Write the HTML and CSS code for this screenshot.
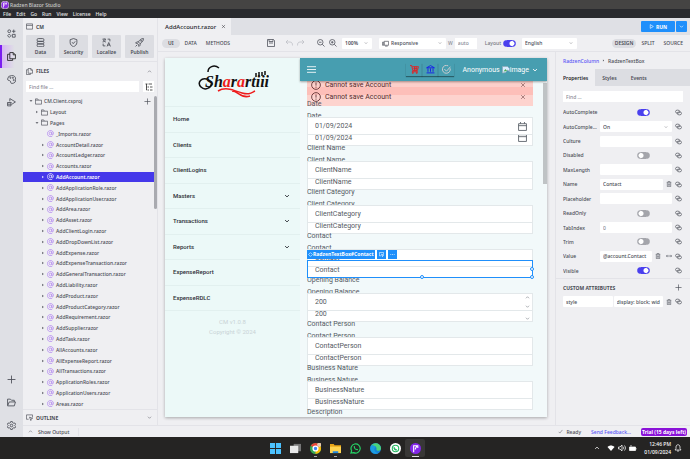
FILE: index.html
```
<!DOCTYPE html>
<html lang="en">
<head>
  <meta charset="UTF-8" />
  <title>Radzen Blazor Studio</title>
  <link rel="stylesheet" href="styles.css">
</head>
<body>
  <!-- Shared icons -->
  <svg class="sprite" aria-hidden="true">
    <symbol id="i-down" viewBox="0 0 16 16"><path d="M3 5.5l5 5 5-5"/></symbol>
    <symbol id="i-up" viewBox="0 0 16 16"><path d="M3 10.5l5-5 5 5"/></symbol>
    <symbol id="i-tri" viewBox="0 0 16 16"><path d="M5 3l6 5-6 5z" fill="currentColor" stroke="none"/></symbol>
    <symbol id="i-trid" viewBox="0 0 16 16"><path d="M2 5h12l-6 6z" fill="currentColor" stroke="none"/></symbol>
    <symbol id="i-plus" viewBox="0 0 16 16"><path d="M8 1v14M1 8h14"/></symbol>
    <symbol id="i-close" viewBox="0 0 16 16"><path d="M3 3l10 10M13 3L3 13"/></symbol>
    <symbol id="i-folder" viewBox="0 0 16 16"><path d="M1 14V2h5l2 3h7v9zM1 5h7"/></symbol>
    <symbol id="i-open" viewBox="0 0 16 16"><path d="M1 13V2h5l2 2h5v3M1 14l3-7h11l-2 7z"/></symbol>
    <symbol id="i-files" viewBox="0 0 16 16"><path d="M5 1h6l4 4v7H5zM11 1v4h4M5 4H1v11h9v-3"/></symbol>
    <symbol id="i-razor" viewBox="0 0 16 16"><circle cx="8" cy="8" r="3"/><path d="M11 5v4c0 3 4 2 4-1a7 7 0 1 0-3 6"/></symbol>
    <symbol id="i-window" viewBox="0 0 16 16"><path d="M1 2h14v12H1zM1 5.5h14"/></symbol>
    <symbol id="i-link" viewBox="0 0 16 16"><ellipse cx="6" cy="6" rx="5" ry="3.5"/><ellipse cx="10" cy="10" rx="5" ry="3.5"/></symbol>
    <symbol id="i-trash" viewBox="0 0 16 16"><path d="M2 3.5h12M6 3V1h4v2M3.5 4v11h9V4M6.5 6.5v6M9.5 6.5v6"/></symbol>
    <symbol id="i-calendar" viewBox="0 0 16 16"><path d="M1 3h14v12H1zM1 6.5h14M4.5 3V0M11.5 3V0"/></symbol>
    <symbol id="i-alert" viewBox="0 0 16 16"><circle cx="8" cy="8" r="7"/><path d="M8 4v5M8 10.5v1.8"/></symbol>
    <symbol id="i-outline" viewBox="0 0 16 16"><path d="M6 12H1V2h14v6M8 7l7 3-3 1-1 4z"/></symbol>
  </svg>

  <div class="window">
    <header class="titlebar">
      <svg class="app-logo" viewBox="0 0 16 16"><circle cx="8" cy="8" r="8" fill="#8a2be2"/><path d="M5 13V4h4l-2 5M11 3v4" stroke="#fff" stroke-width="1.5" fill="none"/></svg>
      <span>Radzen Blazor Studio</span>
    </header>
    <nav class="menubar">
      <button>File</button><button>Edit</button><button>Go</button><button>Run</button><button>View</button><button>License</button><button>Help</button>
    </nav>

    <div class="workspace">
      <nav class="rail">
        <button aria-label="Toolbox"><svg viewBox="0 0 16 16"><circle cx="4" cy="4" r="2.5"/><path d="M12 1v6M9 4h6M4 9l3 3-3 3-3-3zM9.5 9.5h5v5h-5z"/></svg></button>
        <button class="active" aria-label="Files"><svg><use href="#i-files"/></svg></button>
        <button aria-label="Theme"><svg viewBox="0 0 16 16"><path d="M8 1a7 7 0 0 0-7 6c0 4 4 2 5 4s0 4 3 4a7 7 0 0 0-1-14z"/><circle cx="6" cy="5" r="1"/><circle cx="10.5" cy="5" r="1"/><circle cx="12" cy="9" r="1"/></svg></button>
        <button aria-label="Debug"><svg viewBox="0 0 16 16"><path d="M5 6V1l10 6-7 4.5M1 8h6v6H1zM1 11h6M0 8l1 1M8 8L7 9"/></svg></button>
        <span class="spacer"></span>
        <button aria-label="Add"><svg><use href="#i-plus"/></svg></button>
        <button aria-label="Open"><svg><use href="#i-open"/></svg></button>
        <button aria-label="Settings"><svg viewBox="0 0 16 16"><path d="M6.5 1h3l.5 2 2 1 2-.5 1.5 2.5-1.5 1.5v1l1.5 1.5-1.5 2.5-2-.5-2 1-.5 2h-3l-.5-2-2-1-2 .5L.5 10 2 8.5v-1L.5 6 2 3.5l2 .5 2-1z"/><circle cx="8" cy="8" r="2.3"/></svg></button>
      </nav>

      <aside class="explorer">
        <h2 class="project"><svg><use href="#i-window"/></svg>CM</h2>
        <div class="actions">
          <button><svg viewBox="0 0 16 16"><rect x="2" y="1" width="12" height="5" rx="2"/><rect x="2" y="6" width="12" height="4.5" rx="2"/><rect x="2" y="10.5" width="12" height="5" rx="2"/></svg>Data</button>
          <button><svg viewBox="0 0 16 16"><path d="M8 1l6 2v5c0 4-3 6-6 7.5C5 14 2 12 2 8V3zM5.5 7.5L7.5 10 11 6"/></svg>Security</button>
          <button><svg viewBox="0 0 16 16"><path d="M1 2h6M4 1v1M6 2c0 3-3 5-5 5M2 3c1 3 3 4 5 4M9 15l3-7 3 7M10 12.5h4M10 2h4v4M6 14H2v-4"/></svg>Localize</button>
          <button><svg viewBox="0 0 16 16"><path d="M15 1c-5 0-7 3-9 6l3 3c3-2 6-4 6-9zM6 7H3L1 9l4 1M9 10v3l-2 2-1-4M4 12l-3 3"/><circle cx="11" cy="5" r="1"/></svg>Publish</button>
        </div>
        <h2 class="section-title"><svg><use href="#i-files"/></svg>FILES<svg class="fold"><use href="#i-up"/></svg></h2>
        <div class="find">
          <input type="text" aria-label="Find file" placeholder="Find file ...">
          <button aria-label="Tree view"><svg viewBox="0 0 16 16"><path d="M1 2h4M7 2h7M6 8h2M10 8h5M6 14h2M10 14h5M3 2v12h2M3 8h2"/></svg></button>
        </div>
        <ul class="tree" id="tree">
          <li class="root"><svg class="tw"><use href="#i-trid"/></svg><svg><use href="#i-folder"/></svg>CM.Client.csproj<svg class="add"><use href="#i-plus"/></svg></li>
          <li class="dir"><svg class="tw"><use href="#i-tri"/></svg><svg><use href="#i-folder"/></svg>Layout</li>
          <li class="dir"><svg class="tw"><use href="#i-trid"/></svg><svg><use href="#i-folder"/></svg>Pages</li>
        </ul>
        <h2 class="outline"><svg><use href="#i-outline"/></svg>OUTLINE<svg class="fold"><use href="#i-down"/></svg></h2>
      </aside>

      <main class="editor">
        <div class="tabs">
          <button class="file-tab">AddAccount.razor<svg><use href="#i-close"/></svg></button>
          <span class="spacer"></span>
          <button class="run"><svg viewBox="0 0 16 16"><path d="M4 2l10 6-10 6z"/></svg>RUN</button>
          <button class="run run-more" aria-label="Run options"><svg><use href="#i-down"/></svg></button>
        </div>

        <div class="toolbar">
          <div class="modes"><button class="active">UI</button><button>DATA</button><button>METHODS</button></div>
          <div class="edit-tools">
            <button aria-label="Save"><svg viewBox="0 0 16 16"><path d="M1 1h12l2 2v12H1zM4 1v4h8V1M4 8h8"/></svg></button>
            <button class="off undo" aria-label="Undo"><svg viewBox="0 0 16 16"><path d="M6 2L2 6l4 4M2 6h8c4 0 5 3 5 7"/></svg></button>
            <button class="off" aria-label="Redo"><svg viewBox="0 0 16 16"><path d="M10 2l4 4-4 4M14 6H6c-4 0-5 3-5 7"/></svg></button>
            <button class="zoom-out" aria-label="Zoom out"><svg viewBox="0 0 16 16"><circle cx="6.5" cy="6.5" r="5.5"/><path d="M10.5 10.5L15 15M4 6.5h5"/></svg></button>
            <button aria-label="Zoom in"><svg viewBox="0 0 16 16"><circle cx="6.5" cy="6.5" r="5.5"/><path d="M10.5 10.5L15 15M4 6.5h5M6.5 4v5"/></svg></button>
          </div>
          <div class="pick zoom"><select aria-label="Zoom"><option>100%</option></select><svg><use href="#i-down"/></svg></div>
          <div class="pick device"><svg class="lead" viewBox="0 0 16 16"><path d="M5 3h10v9H5zM1 5h3v7H1zM7 14h6"/></svg><select aria-label="Device"><option>Responsive</option></select><svg><use href="#i-down"/></svg></div>
          <label class="size">W <input type="text" placeholder="auto"></label>
          <label class="layout-switch">Layout <input type="checkbox" class="switch" checked></label>
          <div class="pick lang"><select aria-label="Language"><option>English</option></select><svg><use href="#i-down"/></svg></div>
          <span class="spacer"></span>
          <div class="modes views"><button class="active">DESIGN</button><button>SPLIT</button><button>SOURCE</button></div>
        </div>

        <div class="stage">
          <div class="canvas">
            <!-- Designed application -->
            <section class="app">
              <div class="app-side">
                <div class="brand">
                  <svg viewBox="0 0 72 36" role="img" aria-label="Sharartw">
                    <text x="8" y="23" class="brand-text">Sh<tspan class="red">a</tspan>r<tspan class="red">a</tspan>rtiii</text>
                    <path d="M22 4C17 0 11 3 11 8M12 16C4 12 0 19 4 23s10 1 11-4" class="ink"/>
                    <path d="M59 9v4M62 8v4M65 8v4M68 7v4" class="ink"/>
                    <path d="M21 27c8-5 17 0 24 2s9 0 13-2M35 27c6 0 9 8 18 5" class="swash"/>
                  </svg>
                </div>
                <ul class="app-nav">
                  <li>Home</li>
                  <li>Clients</li>
                  <li>ClientLogins</li>
                  <li>Masters<svg><use href="#i-down"/></svg></li>
                  <li>Transactions<svg><use href="#i-down"/></svg></li>
                  <li>Reports<svg><use href="#i-down"/></svg></li>
                  <li>ExpenseReport</li>
                  <li>ExpenseRDLC</li>
                </ul>
                <p class="app-foot">CM v1.0.8<br>Copyright © 2024</p>
              </div>
              <div class="app-main">
                <header class="app-head">
                  <button class="burger" aria-label="Menu"><svg viewBox="0 0 16 16"><path d="M0 3h16M0 8h16M0 13h16"/></svg></button>
                  <span class="spacer"></span>
                  <div class="shortcuts">
                    <button class="cart" aria-label="Cart"><svg viewBox="0 0 16 16"><path d="M0 1h3l2 9h8l2-7H4M5 10l-1 2h10M6 6.5h7M8 3v7M11 3v7"/><circle cx="5" cy="14" r="1"/><circle cx="12" cy="14" r="1"/></svg></button>
                    <button class="bank" aria-label="Bank"><svg viewBox="0 0 16 16"><path d="M1 5l7-4 7 4zM3.5 6v6M8 6v6M12.5 6v6M1 14h14"/></svg></button>
                    <button class="check" aria-label="Tasks"><svg viewBox="0 0 16 16"><path d="M14.5 6A7 7 0 1 1 11 1.5M4 7l4 4 7-8"/></svg></button>
                  </div>
                  <span class="user">Anonymous</span>
                  <span class="avatar"><svg viewBox="0 0 16 16"><path d="M1 1h10l4 4v6l-4-3-4 5-6 1z" fill="#d8ecff" stroke="#8fa8b8"/><path d="M3 11l4-5 3 4z" fill="#4caf50" stroke="none"/></svg>image</span>
                  <svg class="user-more"><use href="#i-down"/></svg>
                </header>
                <div class="app-body">
                  <div class="alerts">
                    <div class="alert"><svg><use href="#i-alert"/></svg>Cannot save Account<svg class="dismiss"><use href="#i-close"/></svg></div>
                    <div class="alert"><svg><use href="#i-alert"/></svg>Cannot save Account<svg class="dismiss"><use href="#i-close"/></svg></div>
                  </div>
                  <form class="fields">
                    <div class="field">
                      <div class="field-label"><label for="d1">Date</label><label for="d2">Date</label></div>
                      <div class="box"><input id="d1" value="01/09/2024"><svg class="cal"><use href="#i-calendar"/></svg></div>
                      <div class="box cut"><input id="d2" value="01/09/2024"><svg class="cal"><use href="#i-calendar"/></svg></div>
                    </div>
                    <div class="field">
                      <div class="field-label"><label for="n1">Client Name</label><label for="n2">Client Name</label></div>
                      <div class="box"><input id="n1" value="ClientName"></div>
                      <div class="box cut"><input id="n2" value="ClientName"></div>
                    </div>
                    <div class="field">
                      <div class="field-label"><label for="c1">Client Category</label><label for="c2">Client Category</label></div>
                      <div class="box"><input id="c1" value="ClientCategory"></div>
                      <div class="box cut"><input id="c2" value="ClientCategory"></div>
                    </div>
                    <div class="field selected">
                      <div class="field-label"><label for="t1">Contact</label><label for="t2">Contact</label></div>
                      <div class="box"><input id="t1" value="Contact"></div>
                      <div class="box cut"><input id="t2" value="Contact"></div>
                      <div class="selection">
                        <div class="sel-tools">
                          <span><svg viewBox="0 0 16 16"><path d="M8 2l6 6-6 6-6-6z"/></svg>RadzenTextBox#Contact</span>
                          <button type="button" aria-label="Select parent"><svg><use href="#i-outline"/></svg></button>
                          <button type="button" aria-label="More"><svg viewBox="0 0 16 16"><path d="M1 8h3M6.5 8h3M12 8h3"/></svg></button>
                        </div>
                        <i class="grip s"></i><i class="grip e"></i><i class="grip se"></i>
                      </div>
                    </div>
                    <div class="field">
                      <div class="field-label"><label for="o1">Opening Balance</label><label for="o2">Opening Balance</label></div>
                      <div class="box"><input id="o1" value="200"><span class="spin"><svg><use href="#i-up"/></svg><svg><use href="#i-down"/></svg></span></div>
                      <div class="box cut"><input id="o2" value="200"><span class="spin"><svg><use href="#i-down"/></svg></span></div>
                    </div>
                    <div class="field">
                      <div class="field-label"><label for="p1">Contact Person</label><label for="p2">Contact Person</label></div>
                      <div class="box"><input id="p1" value="ContactPerson"></div>
                      <div class="box cut"><input id="p2" value="ContactPerson"></div>
                    </div>
                    <div class="field">
                      <div class="field-label"><label for="b1">Business Nature</label><label for="b2">Business Nature</label></div>
                      <div class="box"><input id="b1" value="BusinessNature"></div>
                      <div class="box cut"><input id="b2" value="BusinessNature"></div>
                    </div>
                    <div class="field">
                      <div class="field-label"><label>Description</label></div>
                    </div>
                  </form>
                  <div class="scroll-thumb"></div>
                </div>
              </div>
            </section>
          </div>

          <aside class="props">
            <p class="crumbs"><a href="#">RadzenColumn</a><svg><use href="#i-tri"/></svg>RadzenTextBox</p>
            <div class="prop-tabs"><button class="active">Properties</button><button>Styles</button><button>Events</button></div>
            <input class="prop-find" type="text" aria-label="Find property" placeholder="Find ...">
            <div class="prop-list">
              <div class="prop"><label class="long" for="ac">AutoComplete</label><input id="ac" type="checkbox" class="switch" checked><svg class="bind"><use href="#i-link"/></svg></div>
              <div class="prop"><label for="at">AutoCompleteType</label><div class="pick"><select id="at"><option>On</option></select><svg><use href="#i-down"/></svg></div><svg class="bind"><use href="#i-link"/></svg></div>
              <div class="prop"><label for="cu">Culture</label><input id="cu" type="text"><svg class="bind"><use href="#i-link"/></svg></div>
              <div class="prop"><label for="di">Disabled</label><input id="di" type="checkbox" class="switch"><svg class="bind"><use href="#i-link"/></svg></div>
              <div class="prop"><label for="ml">MaxLength</label><input id="ml" type="text"><svg class="bind"><use href="#i-link"/></svg></div>
              <div class="prop"><label for="nm">Name</label><input id="nm" type="text" value="Contact"><svg class="bin"><use href="#i-trash"/></svg><svg class="bind"><use href="#i-link"/></svg></div>
              <div class="prop"><label for="ph">Placeholder</label><input id="ph" type="text"><svg class="bind"><use href="#i-link"/></svg></div>
              <div class="prop"><label for="ro">ReadOnly</label><input id="ro" type="checkbox" class="switch"><svg class="bind"><use href="#i-link"/></svg></div>
              <div class="prop"><label for="ti">TabIndex</label><input id="ti" type="text" placeholder="0"><svg class="bind"><use href="#i-link"/></svg></div>
              <div class="prop"><label for="tr">Trim</label><input id="tr" type="checkbox" class="switch"><svg class="bind"><use href="#i-link"/></svg></div>
              <div class="prop"><label for="va">Value</label><input id="va" type="text" value="@account.Contact"><svg class="bin"><use href="#i-trash"/></svg><svg class="bin" viewBox="0 0 16 16"><path d="M1 8h14M4 5L1 8l3 3M12 5l3 3-3 3"/></svg><svg class="bind"><use href="#i-link"/></svg></div>
              <div class="prop"><label for="vi">Visible</label><input id="vi" type="checkbox" class="switch" checked><svg class="bind"><use href="#i-link"/></svg></div>
            </div>
            <h3 class="custom-title">CUSTOM ATTRIBUTES<svg><use href="#i-plus"/></svg></h3>
            <div class="custom-row"><input type="text" aria-label="Attribute" value="style"><input type="text" aria-label="Attribute value" value="display: block; width: 100%"><svg class="bin"><use href="#i-trash"/></svg><svg class="bind"><use href="#i-link"/></svg></div>
          </aside>
        </div>
      </main>

      <footer class="statusbar">
        <button class="output"><svg><use href="#i-up"/></svg>Show Output</button>
        <span class="spacer"></span>
        <span class="ready"><svg viewBox="0 0 16 16"><path d="M2 9l4 4 8-10"/></svg>Ready</span>
        <a class="feedback" href="#">Send Feedback...</a>
        <span class="trial">Trial (15 days left)</span>
      </footer>
    </div>

    <footer class="taskbar">
      <span class="task"><svg viewBox="0 0 12 12"><path d="M0 0h5.5v5.5H0zM6.5 0H12v5.5H6.5zM0 6.5h5.5V12H0zM6.5 6.5H12V12H6.5z" fill="#4cc2ff"/></svg></span>
      <span class="task"><svg viewBox="0 0 12 12"><path d="M4 1h8v8H4z" fill="#777"/><path d="M0 3h9v8H0z" fill="#e8e8e8"/></svg></span>
      <span class="task open"><svg viewBox="0 0 12 12"><circle cx="6" cy="6" r="6" fill="#34a853"/><path d="M6 6L.8 3A6 6 0 0 1 11.2 3z" fill="#ea4335"/><path d="M6 6l5.2-3A6 6 0 0 1 6 12z" fill="#fbbc05"/><circle cx="6" cy="6" r="2.6" fill="#4285f4" stroke="#fff"/><circle cx="10" cy="2" r="2.3" fill="#e6c9ae"/></svg></span>
      <span class="task open"><svg viewBox="0 0 12 12"><path d="M0 1h4l1 1.5h7V11H0z" fill="#e8a417"/><path d="M0 4h12v7H0z" fill="#ffd34f"/><path d="M3 9h6v2H3z" fill="#1f87e0"/></svg></span>
      <span class="task"><svg viewBox="0 0 12 12"><path d="M1 11l.8-2.5A5 5 0 1 1 4 10.5z" fill="none" stroke="#25d366" stroke-width="1.3"/><path d="M4 3.5c0 3 2 4.5 4.5 4.5l.3-1.2-1.4-.6-.6.6L5.3 5.2l.4-.7-.6-1.2z" fill="#25d366"/></svg></span>
      <span class="task"><svg viewBox="0 0 12 12"><circle cx="6" cy="6" r="6" fill="#1683d8"/><path d="M1 3c3-5 11-3 11 3 0 3-5 3-5 1 1-3-3-5-6-4z" fill="#4bd47b"/><path d="M1 3c3-1 5 0 5 2-2 1-2 5 3 6.2C4 13-1 9 1 3z" fill="#1b9de2"/></svg></span>
      <span class="task"><svg viewBox="0 0 12 12"><circle cx="6" cy="6" r="6" fill="#fff"/><circle cx="6" cy="6" r="3.5" fill="none" stroke="#25b863" stroke-width="1.2"/><path d="M4.5 4.5c0 2 1.5 3 3 3" stroke="#25b863" fill="none"/></svg></span>
      <span class="task open active"><svg viewBox="0 0 12 12"><circle cx="6" cy="6" r="6" fill="#8226e8"/><path d="M4 10V3h3.5L5.5 7M8.5 2.5v3" fill="none" stroke="#fff" stroke-width="1.2"/></svg></span>
      <div class="tray">
        <svg class="tray-up"><use href="#i-up"/></svg>
        <svg viewBox="0 0 16 16"><path d="M8 14L1 6c4-4 10-4 14 0z" fill="#fff" stroke="none"/></svg>
        <svg viewBox="0 0 16 16"><path d="M1 6v4h3l4 4V2L4 6zM10.5 5.5c1 2 1 3 0 5M13 3c2.5 4 2.5 6 0 10"/></svg>
        <svg viewBox="0 0 16 16"><path d="M1 6h12v7H1zM14 8v3" fill="#fff"/><path d="M4 2v3"/></svg>
        <p class="clock">12:46 PM<br>01/09/2024</p>
        <svg viewBox="0 0 16 16"><path d="M2 12l2-3V6c0-6 8-6 8 0v3l2 3zM6 14h4"/></svg>
      </div>
    </footer>
  </div>

  <script src="files.js"></script>
</body>
</html>
```

FILE: styles.css
```
* {
  box-sizing: border-box;
}

body {
  margin: 0;
  font: 500 5px/8px "Noto Sans", "Open Sans", sans-serif;
  color: #4a4c55;
  background: #252423;
}

button, input, select {
  font: inherit;
  color: inherit;
  border: 0;
  padding: 0;
  margin: 0;
  background: none;
  min-width: 0;
}

button {
  cursor: pointer;
}

h2, h3, p, ul {
  margin: 0;
  padding: 0;
  list-style: none;
  font-size: 5px;
}

a {
  color: #5a55f5;
  text-decoration: none;
}

svg {
  width: 8px;
  height: 8px;
  flex: none;
  fill: none;
  stroke: currentColor;
  stroke-width: 1.5;
}

.sprite {
  position: absolute;
  width: 0;
  height: 0;
}

.spacer {
  flex: 1;
}

.window {
  height: 100vh;
  display: flex;
  flex-direction: column;
}

/* Title and menu */
.titlebar {
  height: 9px;
  display: flex;
  align-items: center;
  gap: 1px;
  padding-left: 1px;
  background: #454443;
  color: #c8c8c8;
}

.menubar {
  height: 9px;
  display: flex;
  align-items: center;
  gap: 5px;
  padding-left: 3px;
  background: #292a2e;
  color: #e4e4e6;
}

.workspace {
  flex: 1;
  min-height: 0;
  display: grid;
  grid-template-columns: 23px 135px 1fr;
  grid-template-rows: 1fr 12px;
  background: #efeff2;
}

/* Icon rail */
.rail {
  grid-row: 1 / 3;
  display: flex;
  flex-direction: column;
  padding: 4px 0 0;
  background: #dfe0e5;
}

.rail button {
  height: 23px;
  display: flex;
  align-items: center;
  justify-content: center;
}

.rail svg {
  width: 9px;
  height: 9px;
}

.rail .active {
  color: #222;
  background: linear-gradient(90deg, #d6b6f2, #dfe0e5 60%);
  border-left: 2px solid #7a1df0;
  padding-right: 2px;
}

/* File explorer */
.explorer {
  display: flex;
  flex-direction: column;
  min-height: 0;
  border-right: 1px solid #e3e3e8;
}

.project, .section-title, .outline {
  display: flex;
  align-items: center;
  gap: 3px;
  padding: 0 5px 0 3px;
}

.project svg, .section-title svg, .outline svg {
  width: 7px;
  height: 7px;
}

.project {
  height: 17px;
}

.actions {
  display: grid;
  grid-template-columns: repeat(4, 1fr);
  gap: 4px;
  padding: 0 3px 3px;
  border-bottom: 1px solid #e3e3e8;
}

.actions button {
  height: 23px;
  display: flex;
  flex-direction: column;
  align-items: center;
  justify-content: center;
  gap: 1px;
  border-radius: 1px;
  background: #dcdde2;
  font-weight: 600;
}

.actions svg {
  width: 9px;
  height: 9px;
}

.section-title {
  height: 18px;
}

.section-title .fold, .outline .fold {
  width: 5px;
  height: 5px;
  margin-left: auto;
}

.find {
  display: flex;
  gap: 4px;
  padding: 1px 3px 4px;
}

.find input {
  flex: 1;
  height: 11px;
  padding: 0 3px;
  background: #fff;
}

.find button {
  width: 11px;
  height: 11px;
  display: flex;
  align-items: center;
  justify-content: center;
  background: #fff;
  color: #222;
}

::placeholder {
  color: #8a8c95;
}

.tree {
  flex: 1;
  min-height: 0;
  display: flex;
  flex-direction: column;
  position: relative;
}

/* scroll thumb */
.tree::after {
  content: "";
  position: absolute;
  top: 0;
  right: 0;
  width: 3px;
  height: 36%;
  border-radius: 2px;
  background: #a9aab0;
}

.tree li {
  flex: 1;
  min-height: 0;
  display: flex;
  align-items: center;
  gap: 2px;
  padding-left: 18px;
}

.tree svg {
  width: 7px;
  height: 7px;
}

.tree .tw {
  width: 4px;
  height: 4px;
}

.tree .root {
  padding-left: 6px;
}

.tree .dir {
  padding-left: 12px;
}

.tree .leaf {
  padding-left: 24px;
}

.tree .razor {
  color: #a978f0;
}

.tree .add {
  margin-left: auto;
  margin-right: 6px;
}

.tree .active, .tree .active .razor {
  color: #fff;
}

.tree .active {
  background: #4538ea;
  font-weight: 600;
}

.outline {
  height: 16px;
  border-top: 1px solid #e3e3e8;
}

/* Editor */
.editor {
  display: flex;
  flex-direction: column;
  min-width: 0;
  min-height: 0;
}

.tabs {
  height: 17px;
  display: flex;
  align-items: center;
  padding-right: 3px;
  background: #dfe0e5;
}

.file-tab {
  height: 17px;
  display: flex;
  align-items: center;
  gap: 5px;
  padding: 0 5px 0 7px;
  background: #efeff2;
  color: #26272c;
  font-size: 6px;
}

.file-tab svg {
  width: 5px;
  height: 5px;
}

.run {
  height: 11px;
  width: 34px;
  display: flex;
  align-items: center;
  justify-content: center;
  gap: 2px;
  background: #1f8ffb;
  color: #fff;
  font-weight: 700;
  border-radius: 1px;
}

.run svg {
  width: 5px;
  height: 5px;
  stroke-width: 2;
}

.run-more {
  width: 11px;
  margin-left: 1px;
}

.toolbar {
  height: 16px;
  display: flex;
  align-items: center;
  padding: 0 3px 0 4px;
  white-space: nowrap;
}

.modes {
  display: flex;
}

.modes button {
  height: 9px;
  padding: 0 4px;
  border-radius: 5px;
}

.modes button + button {
  margin-left: 1px;
}

.modes .active {
  padding: 0 6px;
  background: #dcdde2;
  font-weight: 600;
}

.views .active {
  padding: 0 3px;
}

.edit-tools {
  display: flex;
  gap: 4px;
  margin-left: 33px;
}

.edit-tools button, .edit-tools svg {
  display: block;
  width: 8px;
  height: 8px;
}

.edit-tools .off {
  color: #bcbdc4;
}

.edit-tools .undo {
  margin-left: 6px;
}

.edit-tools .zoom-out {
  margin-left: 8px;
}

.pick {
  height: 11px;
  display: flex;
  align-items: center;
  padding: 0 4px 0 3px;
  background: #fff;
  border-radius: 1px;
}

.pick select {
  flex: 1;
  appearance: none;
}

.pick svg {
  width: 4px;
  height: 4px;
}

.pick .lead {
  width: 7px;
  height: 7px;
  margin-right: 2px;
}

.zoom {
  width: 30px;
  margin-left: 5px;
  font-weight: 600;
}

.device {
  width: 67px;
  margin-left: 7px;
}

.size {
  display: flex;
  gap: 2px;
  align-items: center;
  margin-left: 2px;
  color: #8a8c95;
}

.size input {
  width: 22px;
  height: 11px;
  padding: 0 3px;
  background: #fff;
}

.layout-switch {
  display: flex;
  align-items: center;
  gap: 2px;
  margin-left: 8px;
  color: #75777f;
}

.lang {
  width: 55px;
  margin-left: 6px;
}

.switch {
  appearance: none;
  width: 13px;
  height: 7px;
  border-radius: 4px;
  border: 1px solid #a4a5ab;
  background: radial-gradient(circle at 3px 50%, #fff 2px, #a4a5ab 3px);
}

.switch:checked {
  border-color: #4a40ee;
  background: radial-gradient(circle at 8px 50%, #fff 2px, #4a40ee 3px);
}

.stage {
  flex: 1;
  min-height: 0;
  display: flex;
}

.canvas {
  flex: 1;
  min-width: 0;
  display: flex;
  padding: 6px 8px 8px 7px;
  border-top: 1px solid #e3e3e8;
}

/* Previewed app */
.app {
  flex: 1;
  min-width: 0;
  display: flex;
  overflow: hidden;
  font-family: Roboto, sans-serif;
  font-size: 7px;
  font-weight: 400;
  background: #f2f9fa;
  box-shadow: 0 1px 3px rgba(0, 0, 0, 0.3);
}

.app-side {
  width: 135px;
  flex: none;
  background: #ecf9f8;
}

.brand {
  height: 48px;
  display: flex;
  justify-content: center;
  padding-top: 6px;
}

.brand svg {
  width: 72px;
  height: 36px;
}

.brand-text {
  font: italic bold 16px "Liberation Serif", serif;
  fill: #111;
  stroke: none;
}

.brand-text .red {
  fill: #ee1c1c;
}

.brand .ink {
  stroke: #111;
}

.brand .swash {
  stroke: #ee1c1c;
}

.app-nav {
  height: 205px;
  display: grid;
  grid-template-rows: repeat(8, 1fr);
  font-size: 6px;
  font-weight: 500;
  color: #2c2f36;
  border-bottom: 1px solid #e2f0ef;
}

.app-nav li {
  display: flex;
  align-items: center;
  justify-content: space-between;
  padding: 0 10px 0 8px;
  border-top: 1px solid #e2f0ef;
}

.app-nav svg {
  width: 6px;
  height: 6px;
  stroke-width: 2.5;
}

.app-foot {
  padding-top: 6px;
  font-size: 6px;
  line-height: 10px;
  text-align: center;
  color: #c9d3d6;
}

.app-main {
  flex: 1;
  min-width: 0;
  display: flex;
  flex-direction: column;
}

.app-head {
  height: 23px;
  display: flex;
  align-items: center;
  padding: 0 9px 0 7px;
  background: #479eb0;
  color: #fff;
  box-shadow: 0 1px 2px rgba(0, 0, 0, 0.35);
  position: relative;
  z-index: 1;
}

.burger, .burger svg {
  display: block;
  width: 9px;
  height: 9px;
}

.shortcuts {
  display: flex;
}

.shortcuts button {
  width: 16px;
  height: 13px;
  display: flex;
  align-items: center;
  justify-content: center;
  box-shadow: 0 1px 1px rgba(0, 0, 0, 0.4);
}

.shortcuts svg {
  width: 9px;
  height: 9px;
}

.cart {
  color: #f01818;
}

.bank {
  color: #1212ee;
}

.check {
  color: #e3d3d3;
}

.user {
  margin-left: 8px;
}

.avatar {
  display: flex;
  align-items: center;
  margin-left: 2px;
}

.user-more {
  width: 6px;
  height: 6px;
  margin-left: 3px;
  stroke-width: 2.5;
}

.app-body {
  flex: 1;
  min-height: 0;
  padding: 0 14px 0 7px;
  position: relative;
}

.scroll-thumb {
  position: absolute;
  top: 2px;
  right: 0;
  width: 4px;
  height: 30%;
  background: #bfc3c5;
}

.alerts {
  height: 25px;
  background: linear-gradient(#fccfca 6px, #fdbfb9 6px 14px, #fdd3ce 14px);
  color: #55292a;
}

.alert {
  height: 8px;
  display: flex;
  align-items: center;
  gap: 4px;
  padding: 0 7px 0 4px;
}

.alert + .alert {
  height: 16px;
}

.alert svg {
  width: 10px;
  height: 10px;
  stroke-width: 1.3;
}

.alert .dismiss {
  width: 6px;
  height: 6px;
  margin-left: auto;
}

.fields {
  display: flow-root;
  margin-top: -4px;
  color: #545a62;
}

.field {
  position: relative;
}

/* labels run slightly under the neighbouring inputs */
.field-label {
  height: 19px;
  margin-top: -4px;
  overflow: hidden;
  position: relative;
  line-height: 12px;
}

.field-label label {
  display: block;
}

.box {
  height: 18px;
  display: flex;
  align-items: center;
  padding: 0 5px 0 7px;
  background: #fff;
  border: 1px solid #e3e8ea;
}

.box input {
  flex: 1;
  line-height: 8px;
}

.cut {
  height: 11px;
  align-items: flex-start;
  border-top: 0;
  overflow: hidden;
}

.cut input {
  height: 8px;
  margin-top: -1px;
}

.cal {
  width: 9px;
  height: 9px;
}

.cut .cal {
  margin-top: -2px;
}

.spin {
  display: flex;
  flex-direction: column;
  gap: 4px;
  margin-right: -3px;
}

.spin svg {
  width: 5px;
  height: 5px;
}

.cut .spin {
  margin-top: 5px;
}

/* designer selection */
.selection {
  position: absolute;
  left: 0;
  right: 0;
  bottom: 0;
  height: 18px;
  border: 1px solid #1f8ffb;
}

.selected {
  z-index: 1;
}

.sel-tools {
  position: absolute;
  left: -1px;
  bottom: 18px;
  display: flex;
  gap: 2px;
  font: bold 5px/9px "Noto Sans", sans-serif;
  color: #fff;
}

.sel-tools span, .sel-tools button {
  height: 9px;
  display: flex;
  align-items: center;
  padding: 0 2px;
  background: #1f8ffb;
}

.sel-tools span {
  padding: 0 1px;
}

.sel-tools svg {
  width: 5px;
  height: 5px;
  stroke-width: 2;
}

.grip {
  position: absolute;
  width: 4px;
  height: 4px;
  border: 1px solid #1f8ffb;
  border-radius: 50%;
  background: #fff;
}

.grip.s {
  left: 50%;
  bottom: -2px;
}

.grip.e {
  right: -2px;
  top: 6px;
}

.grip.se {
  right: -2px;
  bottom: -2px;
}

/* Property panel */
.props {
  width: 135px;
  flex: none;
  border: 1px solid #e3e3e8;
  border-width: 1px 0 0 1px;
}

.crumbs {
  height: 17px;
  display: flex;
  align-items: center;
  gap: 3px;
  padding-left: 7px;
}

.crumbs svg {
  width: 3px;
  height: 3px;
}

.prop-tabs {
  height: 17px;
  display: flex;
  background: #dcdde2;
}

.prop-tabs button {
  padding: 0 7px;
  font-weight: 600;
}

.prop-tabs .active {
  background: #efeff2;
  color: #26272c;
}

.prop-find {
  display: block;
  width: calc(100% - 14px);
  height: 11px;
  margin: 5px 7px 3px;
  padding: 0 3px;
  background: #fff;
}

.prop-list {
  height: 173px;
  display: grid;
  grid-template-columns: minmax(0, 1fr);
  grid-template-rows: repeat(12, 1fr);
  padding: 0 8px 0 7px;
}

.prop {
  display: flex;
  align-items: center;
}

.prop label {
  width: 37px;
  flex: none;
  padding-right: 3px;
  overflow: hidden;
  text-overflow: ellipsis;
  white-space: nowrap;
}

.prop .long {
  padding-right: 0;
}

.prop input, .prop .pick {
  flex: 1;
}

.prop input[type="text"], .custom-row input {
  height: 11px;
  padding: 0 3px;
  background: #fff;
  border-radius: 1px;
}

.prop .switch {
  flex: none;
  margin: 0 22px 0 auto;
}

.bind {
  width: 7px;
  height: 7px;
  margin-left: 3px;
}

.bin {
  width: 6px;
  height: 6px;
  margin-left: 3px;
}

.bin + .bin {
  margin-left: 5px;
}

.custom-title {
  height: 18px;
  display: flex;
  align-items: center;
  justify-content: space-between;
  padding: 0 8px 0 7px;
  border-top: 1px solid #e3e3e8;
}

.custom-title svg {
  width: 7px;
  height: 7px;
}

.custom-row {
  display: flex;
  align-items: center;
  padding: 0 8px 0 7px;
}

.custom-row input {
  flex: 1;
}

.custom-row input + input {
  margin-left: 1px;
}

/* Status bar */
.statusbar {
  grid-column: 2 / 4;
  display: flex;
  align-items: center;
  border-top: 1px solid #e3e3e8;
  padding-right: 3px;
}

.output {
  display: flex;
  align-items: center;
  gap: 5px;
  width: 56px;
  padding-left: 5px;
  border-right: 1px solid #e3e3e8;
}

.output svg {
  width: 5px;
  height: 5px;
}

.ready {
  display: flex;
  align-items: center;
  gap: 3px;
}

.ready svg {
  width: 5px;
  height: 5px;
}

.feedback {
  margin: 0 10px;
}

.trial {
  padding: 0 1px;
  border-radius: 2px;
  background: #8a12d8;
  color: #fff;
  font-weight: 700;
}

/* OS taskbar */
.taskbar {
  height: 22px;
  display: flex;
  justify-content: center;
  align-items: center;
  position: relative;
  background: #252423;
  color: #fff;
}

.task {
  width: 20px;
  height: 18px;
  display: flex;
  align-items: center;
  justify-content: center;
  position: relative;
}

.task svg {
  width: 11px;
  height: 11px;
  stroke: none;
}

.task.active {
  background: #383736;
  border-radius: 2px;
}

.open::after {
  content: "";
  position: absolute;
  bottom: 0;
  width: 3px;
  height: 1px;
  background: #a5a5a5;
}

.open.active::after {
  width: 7px;
  background: #ddd;
}

.tray {
  position: absolute;
  right: 8px;
  display: flex;
  align-items: center;
  gap: 3px;
}

.tray .tray-up {
  width: 6px;
  height: 6px;
  margin-right: 4px;
  stroke-width: 2;
}

.clock {
  margin-left: 4px;
  text-align: right;
}
```

FILE: files.js
```
const files = [
  "_Imports", "AccountDetail", "AccountLedger", "Accounts", "AddAccount",
  "AddApplicationRole", "AddApplicationUser", "AddArea", "AddAsset",
  "AddClientLogin", "AddDropDownList", "AddExpense", "AddExpenseTransaction",
  "AddGeneralTransaction", "AddLiability", "AddProduct", "AddProductCategory",
  "AddRequirement", "AddSupplier", "AddTask", "AllAccounts",
  "AllExpenseReport", "AllTransactions", "ApplicationRoles",
  "ApplicationUsers", "Areas"
];

const tree = document.getElementById("tree");

files.forEach(name => {
  const leaf = name === "_Imports";
  const li = document.createElement("li");
  if (leaf) li.className = "leaf";
  if (name === "AddAccount") li.className = "active";
  const arrow = leaf ? "" : '<svg class="tw"><use href="#i-tri"/></svg>';
  li.innerHTML = `${arrow}<svg class="razor"><use href="#i-razor"/></svg>${name}.razor`;
  tree.appendChild(li);
});
```
